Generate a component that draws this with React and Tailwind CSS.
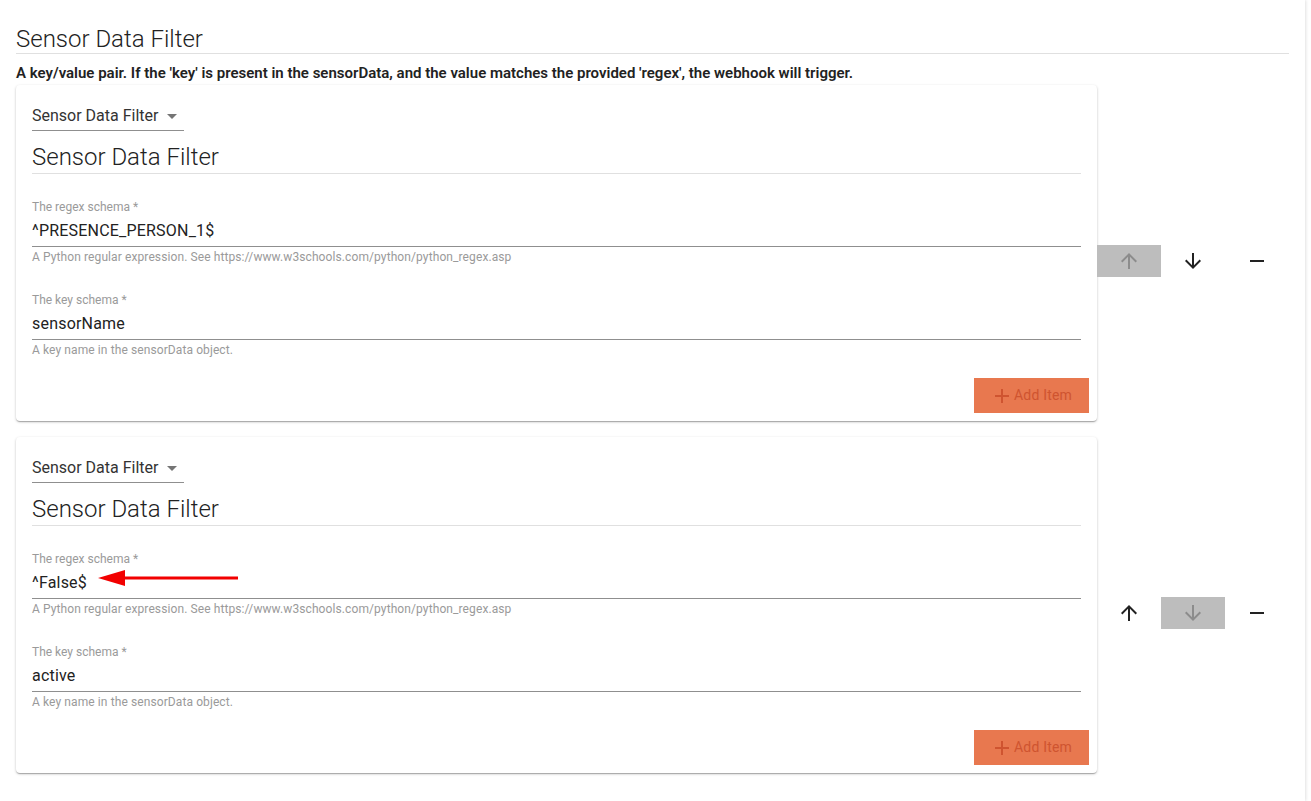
import React from "react";

const font = { fontFamily: "Roboto, 'Noto Sans', sans-serif" };

function ArrowUp({ className }) {
  return (
    <svg viewBox="0 0 24 24" className={className} fill="currentColor">
      <path d="M4 12l1.41 1.41L11 7.83V20h2V7.83l5.58 5.59L20 12l-8-8-8 8z" />
    </svg>
  );
}
function ArrowDown({ className }) {
  return (
    <svg viewBox="0 0 24 24" className={className} fill="currentColor">
      <path d="M20 12l-1.41-1.41L13 16.17V4h-2v12.17l-5.58-5.59L4 12l8 8 8-8z" />
    </svg>
  );
}
function Minus({ className }) {
  return (
    <svg viewBox="0 0 24 24" className={className} fill="currentColor">
      <path d="M19 13H5v-2h14v2z" />
    </svg>
  );
}
function Plus({ className }) {
  return (
    <svg viewBox="0 0 24 24" className={className} fill="currentColor">
      <path d="M19 13h-6v6h-2v-6H5v-2h6V5h2v6h6v2z" />
    </svg>
  );
}

function Field({ label, value, helper, arrow }) {
  return (
    <div className="flex flex-col">
      <div className="h-[16px] text-[12px] leading-[16px] text-[#9a9a9a]">{label}</div>
      <div className="relative h-[32px] pt-[6px] pb-[6px] border-b border-[#8f8f8f] text-[16px] leading-[20px] text-[#222] tracking-[0.2px]">
        {value}
        {arrow && (
          <svg
            className="absolute left-[66px] top-[2px] w-[140px] h-[18px]"
            viewBox="0 0 140 18"
          >
            <polygon points="0,9 27,1 27,17" fill="#f20000" />
            <rect x="25" y="7.5" width="115" height="3" fill="#f20000" />
          </svg>
        )}
      </div>
      <div className="mt-[2px] h-[16px] text-[12px] leading-[16px] text-[#9a9a9a] tracking-[0.1px]">{helper}</div>
    </div>
  );
}

function Card({ regex, keyName, arrow }) {
  return (
    <div className="w-[1081px] mb-4 rounded bg-white shadow-[0_1px_3px_rgba(0,0,0,0.2),0_1px_1px_rgba(0,0,0,0.14),0_2px_1px_-1px_rgba(0,0,0,0.12)] pl-4 pr-4 pt-4 pb-[8px]">
      <div className="relative w-[152px] h-[30px] border-b border-[#8f8f8f] flex items-center text-[16px] text-[#333]">
        Sensor Data Filter
        <svg viewBox="0 0 24 24" className="absolute right-0 top-[3px] w-6 h-6" fill="#757575">
          <path d="M7 10l5 5 5-5z" />
        </svg>
      </div>
      <div className="mt-[10px] h-[33px] border-b border-[#e0e0e0] text-[24px] leading-[33px] font-light text-[#222]">
        Sensor Data Filter
      </div>
      <div className="mt-[25px]">
        <Field
          label="The regex schema *"
          value={regex}
          helper="A Python regular expression. See https://www.w3schools.com/python/python_regex.asp"
          arrow={arrow}
        />
      </div>
      <div className="mt-[27px]">
        <Field label="The key schema *" value={keyName} helper="A key name in the sensorData object." />
      </div>
      <div className="flex justify-end -mr-2 mt-5">
        <button className="h-[35px] w-[115px] bg-[#e8784f] flex items-center pl-4 text-[14px] text-[#cf5430] tracking-[0.2px]">
          <Plus className="w-6 h-6" />
          <span>Add Item</span>
        </button>
      </div>
    </div>
  );
}

function Controls({ upDisabled, downDisabled }) {
  return (
    <div className="flex items-center">
      <div className={`w-16 h-8 flex items-center justify-center ${upDisabled ? "bg-[#bdbdbd] text-[#8c8c8c]" : "text-[#222]"}`}>
        <ArrowUp className="w-6 h-6" />
      </div>
      <div className={`w-16 h-8 flex items-center justify-center ${downDisabled ? "bg-[#bdbdbd] text-[#8c8c8c]" : "text-[#222]"}`}>
        <ArrowDown className="w-6 h-6" />
      </div>
      <div className="w-16 h-8 flex items-center justify-center text-[#222]">
        <Minus className="w-6 h-6" />
      </div>
    </div>
  );
}

export default function App() {
  return (
    <div className="min-h-[801px] bg-white" style={font}>
      <div className="w-[1305px] min-h-[801px] px-4 pt-[22px] shadow-[1px_0_3px_rgba(0,0,0,0.12)]">
        <div className="h-[32px] border-b border-[#e0e0e0] text-[24px] leading-[34px] font-light text-[#222]">
          Sensor Data Filter
        </div>
        <div className="mt-[10px] text-[15px] leading-[18px] font-semibold text-[#222]">
          A key/value pair. If the 'key' is present in the sensorData, and the value matches the provided 'regex', the webhook will trigger.
        </div>
        <div className="mt-[3px] flex items-center">
          <Card regex="^PRESENCE_PERSON_1$" keyName="sensorName" />
          <Controls upDisabled />
        </div>
        <div className="flex items-center">
          <Card regex="^False$" keyName="active" arrow />
          <Controls downDisabled />
        </div>
      </div>
    </div>
  );
}
